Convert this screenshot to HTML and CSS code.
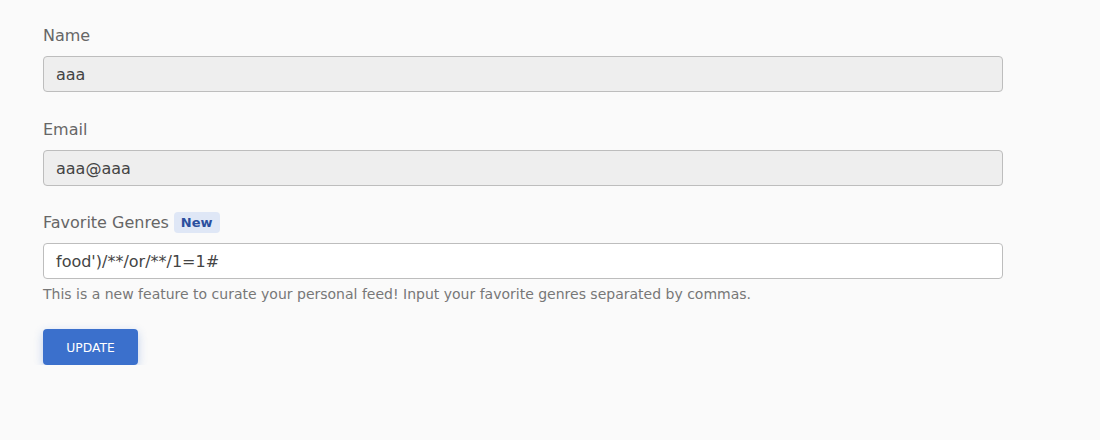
FILE: index.html
```html
<!DOCTYPE html>
<html>
<head>
<meta charset="utf-8">
<link rel="stylesheet" href="styles.css">
</head>
<body>
<form class="form">
  <div class="field">
    <label class="label">Name</label>
    <div class="input disabled">aaa</div>
  </div>
  <div class="field field-tight">
    <label class="label">Email</label>
    <div class="input disabled">aaa@aaa</div>
  </div>
  <div class="field">
    <label class="label label-row">Favorite Genres <span class="badge">New</span></label>
    <div class="input">food')/**/or/**/1=1#</div>
    <p class="help">This is a new feature to curate your personal feed! Input your favorite genres separated by commas.</p>
  </div>
  <button type="button" class="btn">UPDATE</button>
</form>
</body>
</html>
```
FILE: styles.css
```css
html, body {
  margin: 0;
  padding: 0;
  background: #fafafa;
  font-family: "DejaVu Sans", sans-serif;
}
.form {
  padding: 23px 0 0 43px;
  width: 960px;
}
.field {
  margin-bottom: 25px;
}
.field-tight {
  margin-bottom: 24px;
}
.label {
  display: flex;
  align-items: center;
  height: 24px;
  font-size: 16px;
  color: #666;
  margin-bottom: 9px;
}
.label-row {
  gap: 5px;
}
.badge {
  display: inline-flex;
  align-items: center;
  justify-content: center;
  height: 21px;
  padding: 0 7px;
  border-radius: 4px;
  background: #dfe7f6;
  color: #2b4f9e;
  font-size: 13px;
  font-weight: bold;
}
.input {
  box-sizing: border-box;
  height: 36px;
  border: 1px solid #bdbdbd;
  border-radius: 4px;
  background: #fff;
  padding: 0 12px;
  display: flex;
  align-items: center;
  font-size: 16px;
  color: #444;
}
.input.disabled {
  background: #eeeeee;
}
.help {
  margin: 5px 0 0;
  font-size: 14px;
  line-height: 20px;
  color: #777;
}
.btn {
  display: block;
  box-sizing: border-box;
  width: 95px;
  height: 36px;
  padding: 2px 0 0;
  border: none;
  border-radius: 4px;
  background: #3b70cc;
  color: #fff;
  font-family: "DejaVu Sans", sans-serif;
  font-size: 12.3px;
  box-shadow: 0 3px 10px rgba(59, 112, 204, 0.3);
}
```
